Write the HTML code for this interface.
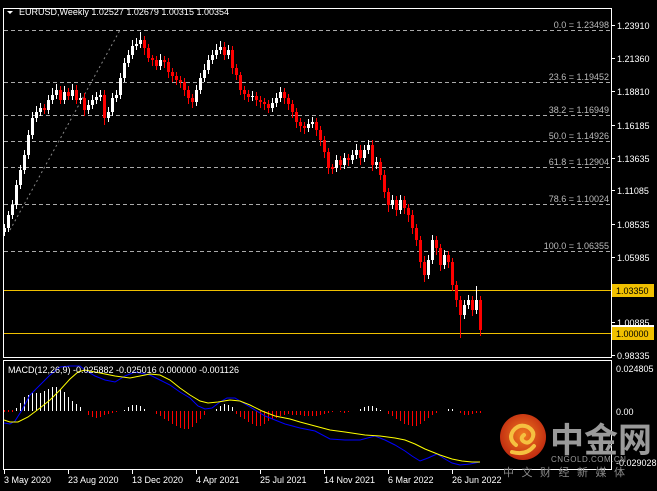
<!DOCTYPE html>
<html><head><meta charset="utf-8"><style>
html,body{margin:0;padding:0;background:#000;width:657px;height:491px;overflow:hidden}
svg text{font-family:"Liberation Sans","Noto Sans CJK SC",sans-serif}
</style></head><body>
<svg width="657" height="491" xmlns="http://www.w3.org/2000/svg" style="display:block">
<rect width="657" height="491" fill="#000"/>
<rect x="3.5" y="8.5" width="608" height="349" fill="none" stroke="#fff"/>
<rect x="3.5" y="360.5" width="608" height="109" fill="none" stroke="#fff"/>
<g stroke="#aaa" stroke-dasharray="4,3" stroke-width="1">
<line x1="4" y1="30.5" x2="611" y2="30.5"/>
<line x1="4" y1="82.5" x2="611" y2="82.5"/>
<line x1="4" y1="115.5" x2="611" y2="115.5"/>
<line x1="4" y1="141.5" x2="611" y2="141.5"/>
<line x1="4" y1="167.5" x2="611" y2="167.5"/>
<line x1="4" y1="204.5" x2="611" y2="204.5"/>
<line x1="4" y1="251.5" x2="611" y2="251.5"/>
</g>
<line x1="10" y1="230" x2="120" y2="30" stroke="#888" stroke-dasharray="2,3"/>
<g fill="#bbb" font-size="9" text-anchor="end">
<text x="609" y="28">0.0 = 1.23498</text>
<text x="609" y="80">23.6 = 1.19452</text>
<text x="609" y="113">38.2 = 1.16949</text>
<text x="609" y="139">50.0 = 1.14926</text>
<text x="609" y="165">61.8 = 1.12904</text>
<text x="609" y="202">78.6 = 1.10024</text>
<text x="609" y="249">100.0 = 1.06355</text>
</g>
<line x1="4" y1="290.5" x2="611" y2="290.5" stroke="#f0c000"/>
<line x1="4" y1="333.5" x2="611" y2="333.5" stroke="#f0c000"/>

<!-- white candles -->
<path stroke="#fff" stroke-width="1" fill="none" d="M4.5 224V236M8.5 211V232M12.5 200V219M16.5 180V209M20.5 165V189M24.5 150V174M28.5 130V159M32.5 112V139M36.5 106V122M40.5 103V116M48.5 95V114M52.5 88V104M56.5 84V99M64.5 86V104M72.5 84V100M80.5 93V104M88.5 100V114M92.5 95V109M96.5 92V104M100.5 90V101M108.5 107V122M112.5 93V116M116.5 90V102M120.5 73V99M124.5 58V82M128.5 50V67M132.5 40V59M136.5 38V50M140.5 32V48M160.5 54V70M196.5 85V106M200.5 73V94M204.5 64V82M208.5 55V74M212.5 50V64M216.5 44V59M220.5 41V54M228.5 45V59M252.5 91V101M272.5 98V112M276.5 93V107M280.5 87V102M308.5 119V132M312.5 117V128M336.5 155V172M344.5 153V169M352.5 150V164M356.5 144V159M364.5 145V162M368.5 140V154M376.5 157V169M392.5 195V209M400.5 195V214M428.5 255V279M432.5 235V264M444.5 250V269M464.5 300V319M468.5 295V309M476.5 286V314"/>
<path fill="#fff" d="M3 228h3v4h-3zM7 215h3v13h-3zM11 205h3v10h-3zM15 185h3v20h-3zM19 170h3v15h-3zM23 155h3v15h-3zM27 135h3v20h-3zM31 118h3v17h-3zM35 112h3v6h-3zM39 108h3v4h-3zM47 100h3v10h-3zM51 95h3v5h-3zM55 90h3v5h-3zM63 92h3v8h-3zM71 90h3v6h-3zM79 98h3v2h-3zM87 105h3v5h-3zM91 100h3v5h-3zM95 97h3v3h-3zM99 95h3v2h-3zM107 112h3v6h-3zM111 98h3v14h-3zM115 95h3v3h-3zM119 78h3v17h-3zM123 63h3v15h-3zM127 55h3v8h-3zM131 46h3v9h-3zM135 44h3v2h-3zM139 40h3v4h-3zM159 60h3v6h-3zM195 90h3v12h-3zM199 78h3v12h-3zM203 70h3v8h-3zM207 60h3v10h-3zM211 55h3v5h-3zM215 50h3v5h-3zM219 47h3v3h-3zM227 50h3v5h-3zM251 96h3v1h-3zM271 103h3v5h-3zM275 98h3v5h-3zM279 92h3v6h-3zM307 124h3v4h-3zM311 122h3v2h-3zM335 160h3v8h-3zM343 158h3v7h-3zM351 155h3v5h-3zM355 150h3v5h-3zM363 150h3v8h-3zM367 145h3v5h-3zM375 162h3v3h-3zM391 200h3v5h-3zM399 200h3v10h-3zM427 260h3v15h-3zM431 240h3v20h-3zM443 255h3v10h-3zM463 305h3v10h-3zM467 300h3v5h-3zM475 300h3v10h-3z"/>
<!-- red candles -->
<path stroke="#f00" stroke-width="1" fill="none" d="M44.5 104V114M60.5 86V104M68.5 88V100M76.5 85V104M84.5 93V116M104.5 90V125M144.5 36V55M148.5 44V62M152.5 55V66M156.5 56V70M164.5 56V68M168.5 58V78M172.5 68V82M176.5 72V85M180.5 76V88M184.5 78V96M188.5 86V104M192.5 94V108M224.5 42V60M232.5 46V74M236.5 64V80M240.5 72V95M244.5 86V100M248.5 90V102M256.5 92V106M260.5 96V108M264.5 98V110M268.5 100V113M284.5 88V104M288.5 94V110M292.5 100V118M296.5 108V128M300.5 118V132M304.5 122V134M316.5 118V136M320.5 126V146M324.5 136V158M328.5 148V174M332.5 164V174M340.5 156V170M348.5 154V166M360.5 145V165M372.5 140V171M380.5 158V180M384.5 170V198M388.5 188V212M396.5 196V216M404.5 196V214M408.5 204V222M412.5 210V234M416.5 224V246M420.5 236V268M424.5 256V282M436.5 236V255M440.5 244V271M448.5 251V268M452.5 258V291M456.5 281V307M460.5 296V338M472.5 296V316M480.5 296V336"/>
<path fill="#f00" d="M43 108h3v2h-3zM59 90h3v10h-3zM67 92h3v4h-3zM75 90h3v10h-3zM83 98h3v12h-3zM103 95h3v23h-3zM143 40h3v8h-3zM147 48h3v10h-3zM151 58h3v2h-3zM155 60h3v6h-3zM163 60h3v2h-3zM167 62h3v10h-3zM171 72h3v4h-3zM175 76h3v4h-3zM179 80h3v2h-3zM183 82h3v8h-3zM187 90h3v8h-3zM191 98h3v4h-3zM223 47h3v8h-3zM231 50h3v18h-3zM235 68h3v7h-3zM239 75h3v15h-3zM243 90h3v4h-3zM247 94h3v3h-3zM255 96h3v4h-3zM259 100h3v2h-3zM263 102h3v2h-3zM267 104h3v4h-3zM283 92h3v6h-3zM287 98h3v6h-3zM291 104h3v8h-3zM295 112h3v10h-3zM299 122h3v4h-3zM303 126h3v2h-3zM315 122h3v8h-3zM319 130h3v10h-3zM323 140h3v12h-3zM327 152h3v16h-3zM331 167h3v2h-3zM339 160h3v5h-3zM347 158h3v2h-3zM359 150h3v8h-3zM371 145h3v20h-3zM379 162h3v13h-3zM383 175h3v17h-3zM387 192h3v13h-3zM395 200h3v10h-3zM403 200h3v8h-3zM407 208h3v7h-3zM411 215h3v13h-3zM415 228h3v12h-3zM419 240h3v22h-3zM423 262h3v13h-3zM435 240h3v8h-3zM439 248h3v17h-3zM447 255h3v7h-3zM451 262h3v23h-3zM455 285h3v15h-3zM459 300h3v15h-3zM471 300h3v10h-3zM479 300h3v30h-3z"/>

<!-- MACD histogram -->
<path stroke="#fff" stroke-width="1" fill="none" d="M16.5 408V411M20.5 403V411M24.5 397V411M28.5 395V411M32.5 393V411M36.5 393V411M40.5 393V411M44.5 391V411M48.5 389V411M52.5 387V411M56.5 387V411M60.5 389V411M64.5 392V411M68.5 397V411M72.5 401V411M76.5 404V411M80.5 407V411M124.5 410V411M128.5 407V411M132.5 405V411M136.5 405V411M140.5 406V411M144.5 409V411M216.5 409V411M220.5 406V411M224.5 404V411M228.5 405V411M232.5 407V411M360.5 409V411M364.5 407V411M368.5 406V411M372.5 406V411M376.5 408V411M380.5 410V411M448.5 409V411M452.5 409V411"/>
<path stroke="#f00" stroke-width="1" fill="none" d="M4.5 410V412M8.5 410V412M12.5 410V412M88.5 411V415M92.5 411V417M96.5 411V418M100.5 411V417M104.5 411V415M108.5 411V414M112.5 411V413M116.5 411V412M156.5 411V414M160.5 411V416M164.5 411V419M168.5 411V421M172.5 411V424M176.5 411V426M180.5 411V428M184.5 411V429M188.5 411V429M192.5 411V427M196.5 411V423M200.5 411V419M204.5 411V415M236.5 411V414M240.5 411V417M244.5 411V419M248.5 411V422M252.5 411V424M256.5 411V426M260.5 411V426M264.5 411V424M268.5 411V421M272.5 411V419M276.5 411V418M280.5 411V416M284.5 411V415M288.5 411V414M292.5 411V415M296.5 411V415M300.5 411V415M304.5 411V416M308.5 411V416M312.5 411V416M316.5 411V416M320.5 411V415M324.5 411V414M328.5 411V413M332.5 411V412M340.5 411V412M344.5 411V413M348.5 411V412M388.5 411V414M392.5 411V416M396.5 411V419M400.5 411V421M404.5 411V424M408.5 411V425M412.5 411V426M416.5 411V426M420.5 411V424M424.5 411V421M428.5 411V418M432.5 411V415M436.5 411V413M460.5 411V413M464.5 411V415M468.5 411V415M472.5 411V414M476.5 411V413M480.5 411V413"/>
<polyline fill="none" stroke="#0000ff" stroke-width="1" points="4,423 10,424 15,421 22,410 30,395 40,385 50,375 60,367 70,366 80,366 85,370 95,376 105,380 115,382 125,376 135,372 150,375 160,380 170,385 180,392 190,398 198,406 205,409 212,408 220,402 227,398 235,398 245,404 255,410 265,416 275,420 285,424 300,428 315,431 330,439 345,440 360,440 375,436 385,440 395,445 405,451 412,456 420,461 428,458 437,454 445,459 452,463 460,465 470,464 480,462"/>
<polyline fill="none" stroke="#ffff00" stroke-width="1" points="4,420 10,422 18,422 28,417 40,408 50,400 60,390 70,379 78,372 85,370 100,373 115,376 130,378 150,374 160,375 170,380 180,388 190,395 200,401 208,403 218,402 230,400 240,401 250,405 262,411 275,416 290,419 300,422 315,426 330,430 345,432 365,435 380,436 395,438 405,440 415,444 425,449 440,455 452,459 462,461 472,462 480,462"/>

<g fill="#fff" font-size="9">
<g stroke="#fff"><line x1="612" y1="25.5" x2="615" y2="25.5"/><line x1="612" y1="58.5" x2="615" y2="58.5"/><line x1="612" y1="91.5" x2="615" y2="91.5"/><line x1="612" y1="125.5" x2="615" y2="125.5"/><line x1="612" y1="158.5" x2="615" y2="158.5"/><line x1="612" y1="190.5" x2="615" y2="190.5"/><line x1="612" y1="224.5" x2="615" y2="224.5"/><line x1="612" y1="257.5" x2="615" y2="257.5"/><line x1="612" y1="322.5" x2="615" y2="322.5"/><line x1="612" y1="355.5" x2="615" y2="355.5"/></g>
<text x="617" y="29">1.23910</text>
<text x="617" y="62">1.21360</text>
<text x="617" y="95">1.18810</text>
<text x="617" y="129">1.16185</text>
<text x="617" y="162">1.13635</text>
<text x="617" y="194">1.11085</text>
<text x="617" y="228">1.08535</text>
<text x="617" y="261">1.05985</text>
<text x="617" y="326">1.00885</text>
<text x="617" y="359">0.98335</text>
<text x="616" y="372">0.024805</text>
<text x="616" y="415">0.00</text>
<text x="616" y="466">-0.029028</text>
</g>
<rect x="612" y="284" width="42" height="13" fill="#f0c000"/>
<text x="616" y="294" font-size="9" fill="#000">1.03350</text>
<rect x="612" y="327" width="42" height="13" fill="#f0c000"/>
<text x="616" y="337" font-size="9" fill="#000">1.00000</text>
<rect x="612" y="325" width="42" height="2" fill="#fff"/>
<polygon points="7,11 13,11 10,14" fill="#fff"/>
<text x="19" y="15" font-size="9" fill="#fff">EURUSD,Weekly  1.02527 1.02679 1.00315 1.00354</text>
<text x="8" y="373" font-size="9" fill="#fff">MACD(12,26,9) -0.025882 -0.025016 0.000000 -0.001126</text>
<g stroke="#fff"><line x1="4.5" y1="470" x2="4.5" y2="474"/><line x1="68.5" y1="470" x2="68.5" y2="474"/><line x1="132.5" y1="470" x2="132.5" y2="474"/><line x1="196.5" y1="470" x2="196.5" y2="474"/><line x1="260.5" y1="470" x2="260.5" y2="474"/><line x1="324.5" y1="470" x2="324.5" y2="474"/><line x1="388.5" y1="470" x2="388.5" y2="474"/><line x1="452.5" y1="470" x2="452.5" y2="474"/></g>
<g fill="#fff" font-size="9">
<text x="4" y="483">3 May 2020</text>
<text x="68" y="483">23 Aug 2020</text>
<text x="132" y="483">13 Dec 2020</text>
<text x="196" y="483">4 Apr 2021</text>
<text x="260" y="483">25 Jul 2021</text>
<text x="324" y="483">14 Nov 2021</text>
<text x="388" y="483">6 Mar 2022</text>
<text x="452" y="483">26 Jun 2022</text>
</g>
<defs><radialGradient id="g" cx="50%" cy="45%" r="55%"><stop offset="0" stop-color="#f07a20"/><stop offset="1" stop-color="#c02a10"/></radialGradient></defs>
<circle cx="523" cy="437" r="23" fill="url(#g)"/>
<path d="M516 445 q-8 -6 -3 -14 q6 -8 15 -4 q8 5 4 12 q-4 6 -9 2 q-3 -3 1 -6 M512 452 q14 4 22 -6" fill="none" stroke="#f5c040" stroke-width="4" stroke-linecap="round"/>
<text x="550" y="452" font-size="34" font-weight="bold" fill="#9a9a9a">中金网</text>
<text x="551" y="462" font-size="8" fill="#9a9a9a" letter-spacing="0.5">CNGOLD.COM.CN</text>
<text x="503" y="476" font-size="11" fill="#888" letter-spacing="7.5">中文财经新媒体</text>
</svg>
</body></html>
